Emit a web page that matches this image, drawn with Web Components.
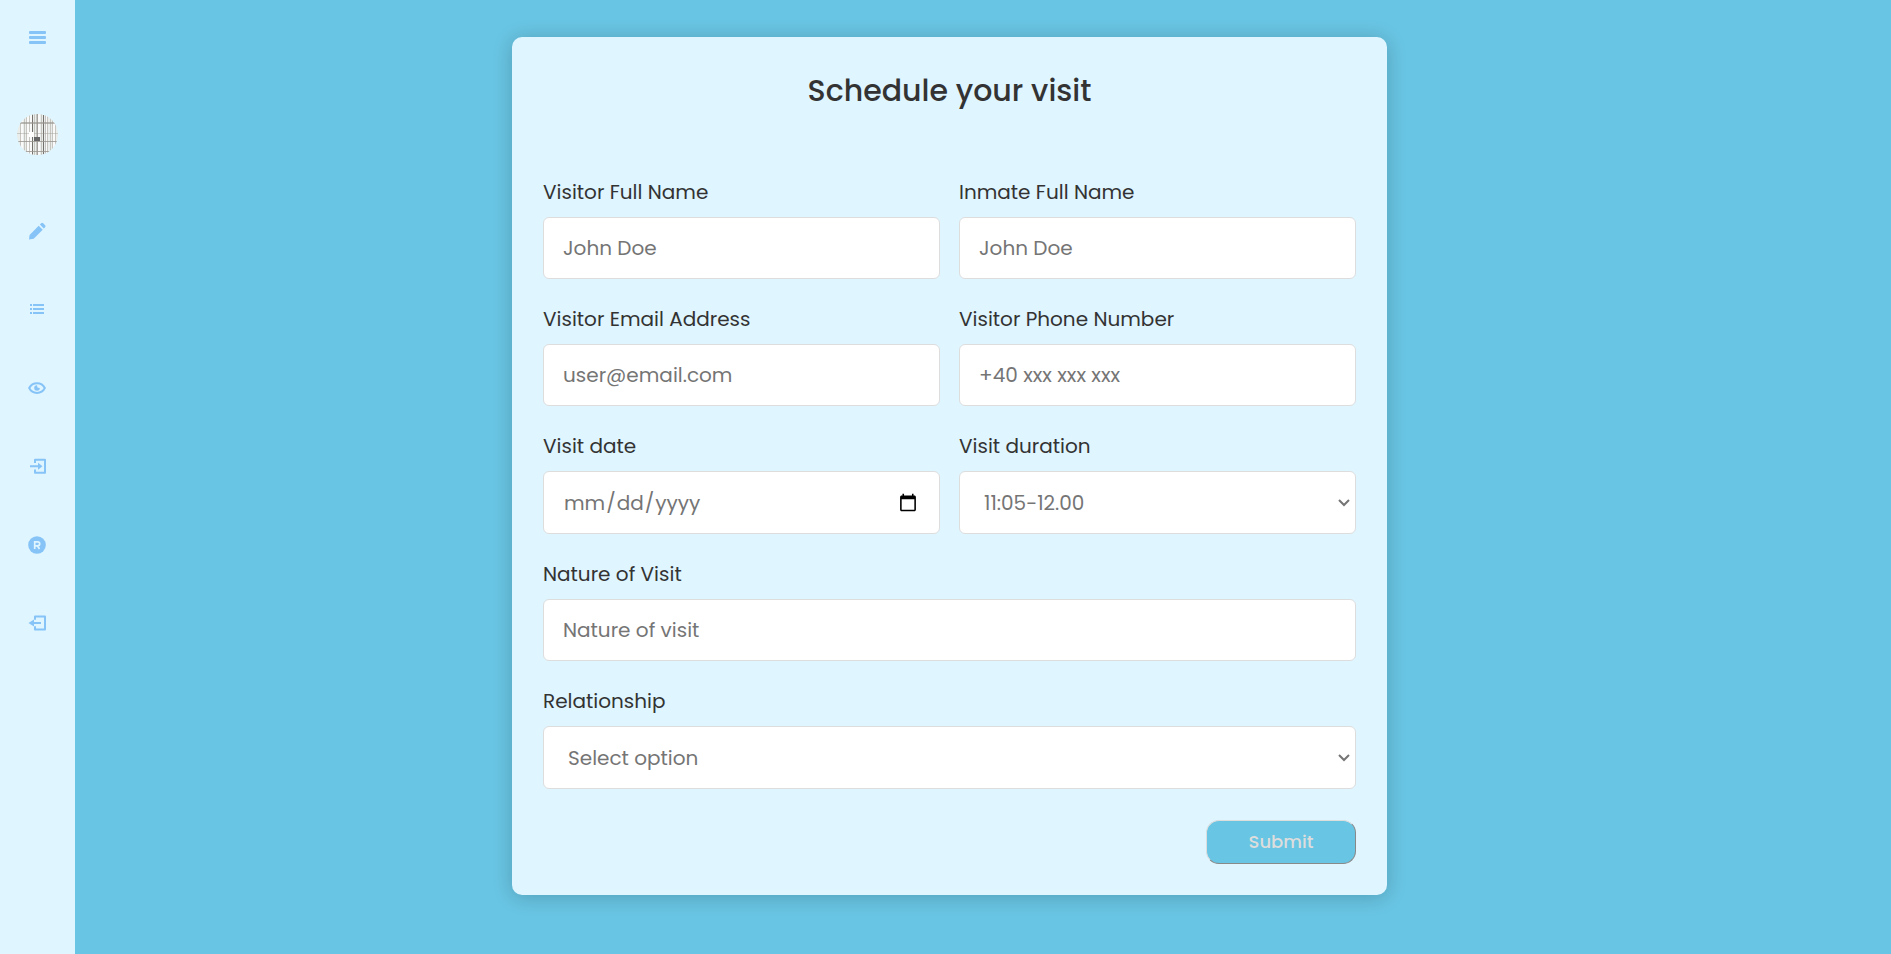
<!DOCTYPE html>
<html lang="en">
<head>
<meta charset="utf-8">
<meta name="viewport" content="width=device-width, initial-scale=1">
<title>Schedule your visit</title>
<style>
  html, body { margin: 0; min-height: 100%; }
  body {
    --sky: #68c5e3;
    --pale: #dff5ff;
    --ink: #333;
    --muted: #757575;
    --line: #ddd;
    --icon: #86c3f7;
    background: var(--sky);
    color: var(--ink);
    font-family: Poppins, Inter, "Open Sans", sans-serif;
  }
</style>
</head>
<body>
<visit-app>
  <side-bar slot="nav"></side-bar>
  <visit-card heading="Schedule your visit">
    <form-field kind="text" name="visitor" label="Visitor Full Name" placeholder="John Doe"></form-field>
    <form-field kind="text" name="inmate" label="Inmate Full Name" placeholder="John Doe"></form-field>
    <form-field kind="email" name="email" label="Visitor Email Address" placeholder="user@email.com"></form-field>
    <form-field kind="tel" name="phone" label="Visitor Phone Number" placeholder="+40 xxx xxx xxx"></form-field>
    <form-field kind="date" name="date" label="Visit date"></form-field>
    <form-field kind="select" name="duration" label="Visit duration" placeholder="11:05-12.00"></form-field>
    <form-field wide kind="text" name="nature" label="Nature of Visit" placeholder="Nature of visit"></form-field>
    <form-field wide kind="select" name="relationship" label="Relationship" placeholder="Select option"></form-field>
    <submit-button slot="actions">Submit</submit-button>
  </visit-card>
</visit-app>

<script>
class VisitApp extends HTMLElement {
  constructor() {
    super();
    this.attachShadow({ mode: "open" }).innerHTML = `
      <style>
        :host { display: flex; min-height: 100vh; }
        /* The wider right padding offsets most of the sidebar, so the card sits near the window's middle. */
        main { flex: 1; display: flex; justify-content: center; align-items: flex-start; padding: 37px 87px 37px 20px; }
        @media (max-width: 1000px) { main { padding: 20px; } }
      </style>
      <slot name="nav"></slot>
      <main><slot></slot></main>`;
  }
}

class SideBar extends HTMLElement {
  constructor() {
    super();
    this.attachShadow({ mode: "open" }).innerHTML = `
      <style>
        :host { display: block; flex: none; width: 75px; background: var(--pale); color: var(--icon); }
        nav { display: flex; flex-direction: column; align-items: center; padding-top: 27px; }
        a, button { display: block; color: inherit; background: none; border: 0; padding: 0; height: 20px; cursor: pointer; }
        svg { display: block; width: 19px; height: 20px; fill: currentColor; }
        .avatar { height: 41px; margin: 67px 0; }
        .avatar svg { width: 41px; height: 41px; }
        .links { display: flex; flex-direction: column; gap: 58px; }
      </style>
      <nav aria-label="Main">
        <button type="button" aria-label="Menu">
          <svg viewBox="0 0 19 20"><rect x="1" y="4" width="17" height="3" rx="1"/><rect x="1" y="9" width="17" height="3" rx="1"/><rect x="1" y="14" width="17" height="3" rx="1"/></svg>
        </button>
        <a class="avatar" href="#profile" aria-label="Profile">
          <svg viewBox="0 0 41 41">
            <clipPath id="round"><circle cx="20.5" cy="20.5" r="20.5"/></clipPath>
            <g clip-path="url(#round)">
              <rect width="42" height="42" fill="#e9edeb"/>
              <g fill="#fafafa"><rect x="4" width="2" height="42"/><rect x="10" width="2" height="42"/><rect x="13" width="2" height="42"/><rect x="21" width="2" height="42"/><rect x="28" width="2" height="42"/><rect x="36" width="2" height="42"/></g>
              <g fill="#c6c5c0"><rect x="3" width="1" height="42"/><rect x="7" width="1" height="42"/><rect x="9" width="1" height="42"/><rect x="12" width="1" height="42"/><rect x="17" width="1" height="42"/><rect x="19" width="1" height="42"/><rect x="24" width="1" height="42"/><rect x="30" width="1" height="42"/><rect x="33" width="1" height="42"/><rect x="35" width="1" height="42"/><rect x="38" width="1" height="42"/></g>
              <g fill="#74706c"><rect x="15" width="1" height="42"/><rect x="20" width="1" height="42" opacity=".6"/><rect x="26" width="1" height="42"/><rect x="28" width="1" height="42" opacity=".4"/></g>
              <g fill="#99958f" opacity=".8"><rect y="8" width="42" height="2" opacity=".8"/><rect y="19" width="42" height="1" opacity=".5"/><rect y="27" width="42" height="1"/><rect y="37" width="42" height="1"/></g>
              <rect x="12" y="18" width="5" height="5" fill="#fff"/>
              <rect x="17" y="23" width="6" height="4" fill="#666"/>
            </g>
          </svg>
        </a>
        <div class="links">
          <a href="#schedule" aria-label="Schedule">
            <svg viewBox="0 0 19 20"><path d="M1 17.500 1.600 13 10.700 3.800l4 4-9 9ZM11.900 2.600l1.300-1.300q1-1 2 0l1.900 1.900q1 1 0 2l-1.300 1.300Z"/></svg>
          </a>
          <a href="#visits" aria-label="Visits">
            <svg viewBox="0 0 19 20"><path d="M2 4h2v2H2zm3 0h11v2H5zM2 8h2v2H2zm3 0h11v2H5zM2 12h2v2H2zm3 0h11v2H5z"/></svg>
          </a>
          <a href="#view" aria-label="View">
            <svg viewBox="0 0 19 20"><path fill="none" stroke="currentColor" stroke-width="2" d="M1.200 10C4.400 3.500 13.600 3.500 16.800 10 13.600 16.500 4.400 16.500 1.200 10Z"/><path d="M9 7.200 9.400 9.600 11.800 10A2.800 2.800 0 1 1 9 7.200Z"/></svg>
          </a>
          <a href="#login" aria-label="Log in">
            <svg viewBox="0 0 19 20"><path fill="none" stroke="currentColor" stroke-width="2" stroke-linejoin="round" d="M7 7V3.800h10v13H7V13.500"/><path d="M2 9.300H10V6.800l4.500 3.500L10 13.800v-2.500H2z"/></svg>
          </a>
          <a href="#register" aria-label="Register">
            <svg viewBox="0 0 19 20"><circle cx="9" cy="11" r="8.800"/><g fill="none" stroke="var(--pale)" stroke-width="1.700"><path d="M6.700 15V7.800h3a2 2 0 0 1 0 4H6.700M9.300 11.800 11.500 15"/></g></svg>
          </a>
          <a href="#logout" aria-label="Log out">
            <svg viewBox="0 0 19 20"><path fill="none" stroke="currentColor" stroke-width="2" stroke-linejoin="round" d="M7 7.800V4.600h10v13H7V14.300"/><path d="M13 10.100H6V7.600L.5 11.100l5.500 3.500v-2.500h7z"/></svg>
          </a>
        </div>
      </nav>`;
  }
}

class VisitCard extends HTMLElement {
  connectedCallback() {
    this.attachShadow({ mode: "open" }).innerHTML = `
      <style>
        :host { display: block; box-sizing: border-box; width: 100%; max-width: 875px; padding: 31px;
          background: var(--pale); border-radius: 10px; box-shadow: 0 2px 20px rgba(0, 0, 0, .2); }
        h1 { margin: 0 0 64px; font-size: 30px; line-height: 45px; font-weight: 500; text-align: center; }
        .grid { display: grid; grid-template-columns: 1fr 1fr; column-gap: 19px; row-gap: 25px; }
        .actions { display: flex; justify-content: flex-end; margin-top: 31px; }
        @media (max-width: 700px) { .grid { grid-template-columns: 1fr; } ::slotted(form-field) { grid-column: 1 / -1; } }
      </style>
      <h1></h1>
      <form>
        <div class="grid"><slot></slot></div>
        <div class="actions"><slot name="actions"></slot></div>
      </form>`;
    this.shadowRoot.querySelector("h1").textContent = this.getAttribute("heading");
  }
}

class FormField extends HTMLElement {
  connectedCallback() {
    const kind = this.getAttribute("kind");
    const hint = this.getAttribute("placeholder") || "";
    const control = kind === "select"
      ? `<select id="control"><option>${hint}</option></select>`
      : `<input id="control" type="${kind}" placeholder="${hint}">`;
    this.attachShadow({ mode: "open" }).innerHTML = `
      <style>
        :host { display: block; min-width: 0; }
        :host([wide]) { grid-column: 1 / -1; }
        label { display: block; margin-bottom: 10px; font-size: 20px; line-height: 30px; font-weight: 400; }
        input, select { display: block; box-sizing: border-box; width: 100%; height: 62px; margin: 0; padding: 0 19px;
          font: 400 20px/30px Poppins, Inter, "Open Sans", sans-serif; color: var(--muted); background: #fff;
          border: 1px solid var(--line); border-radius: 6px; outline: none; }
        select, input[type="date"] { height: 63px; }
        select { appearance: none; padding: 0 24px;
          background: #fff url("data:image/svg+xml,%3Csvg xmlns='http://www.w3.org/2000/svg' width='12' height='8'%3E%3Cpath d='M1 1l5 5 5-5' fill='none' stroke='%23757575' stroke-width='2'/%3E%3C/svg%3E") no-repeat right 5px center; }
        input::placeholder { color: var(--muted); opacity: 1; }
        input:focus, select:focus { border-color: var(--sky); }
      </style>
      <label for="control">${this.getAttribute("label")}</label>
      ${control}`;
    this.shadowRoot.getElementById("control").name = this.getAttribute("name");
  }
}

class SubmitButton extends HTMLElement {
  constructor() {
    super();
    this.attachShadow({ mode: "open" }).innerHTML = `
      <style>
        :host { display: block; }
        button { display: block; box-sizing: border-box; width: 150px; height: 44px; padding: 0 0 2px;
          font: 500 18px/27px Poppins, Inter, "Open Sans", sans-serif; color: #ddd; background: var(--sky);
          border: 1px outset #ddd; border-radius: 13px; cursor: pointer; }
      </style>
      <button type="button"><slot></slot></button>`;
  }
}

customElements.define("visit-app", VisitApp);
customElements.define("side-bar", SideBar);
customElements.define("visit-card", VisitCard);
customElements.define("form-field", FormField);
customElements.define("submit-button", SubmitButton);
</script>
</body>
</html>
